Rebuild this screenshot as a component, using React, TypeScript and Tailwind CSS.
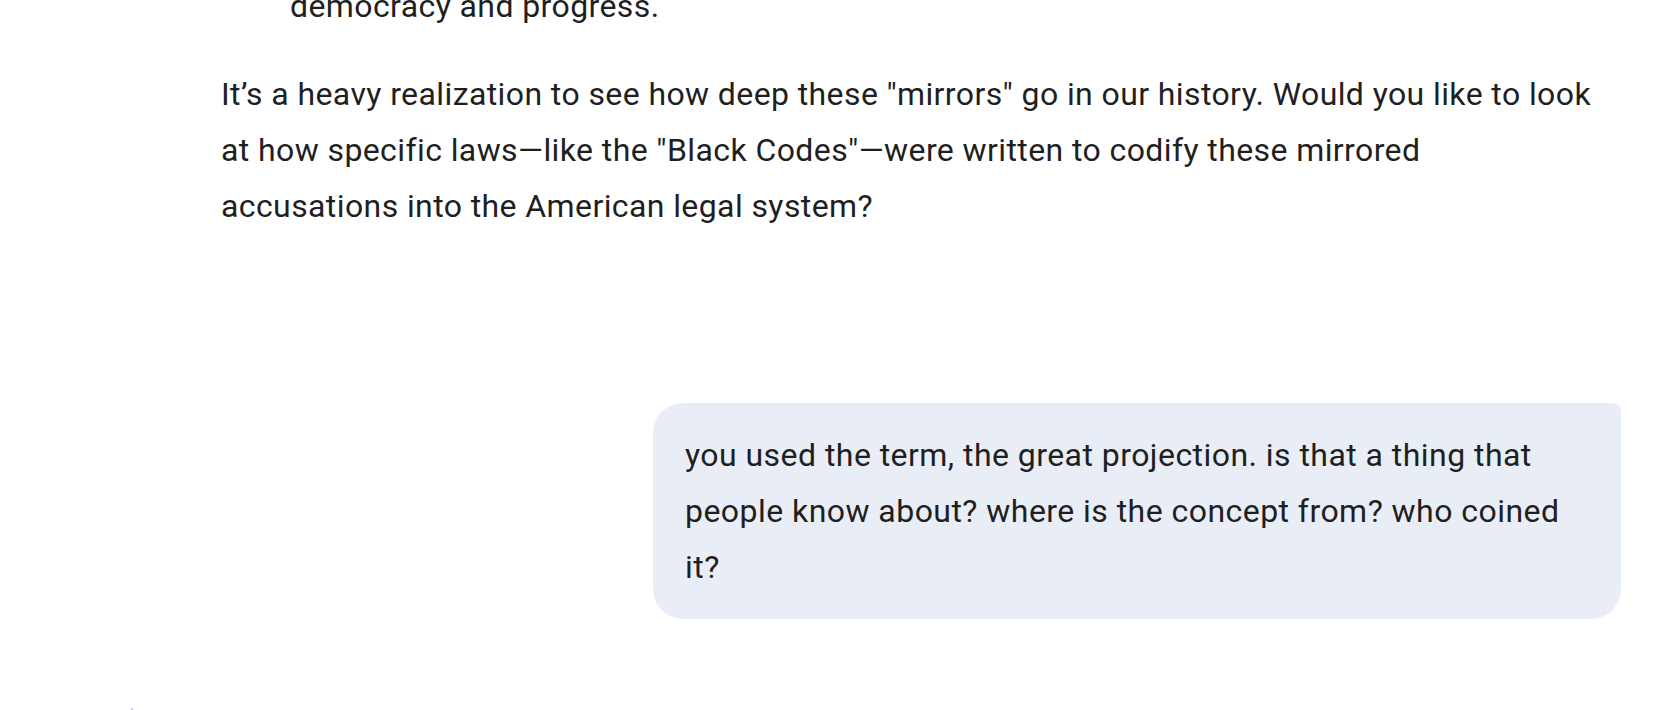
const font = { fontFamily: "Roboto, 'Noto Sans', sans-serif" };

function Sparkle() {
  return (
    <svg width="32" height="32" viewBox="0 0 24 24" aria-hidden="true">
      <defs>
        <linearGradient id="sp" x1="0" y1="0" x2="1" y2="1">
          <stop offset="0" stopColor="#4285f4" />
          <stop offset="1" stopColor="#9b72cb" />
        </linearGradient>
      </defs>
      <path
        d="M12 0C12.6 6.4 17.6 11.4 24 12C17.6 12.6 12.6 17.6 12 24C11.4 17.6 6.4 12.6 0 12C6.4 11.4 11.4 6.4 12 0Z"
        fill="url(#sp)"
      />
    </svg>
  );
}

export default function App() {
  return (
    <div className="h-[710px] w-full overflow-hidden bg-white text-[#1f1f1f]" style={font}>
      <div className="-mt-[22px] flex flex-col">
        <div className="pl-[221px] pr-[37px] text-[32px] leading-[56px] tracking-[0.4px]">
          <ul className="pl-[69px]">
            <li>democracy and progress.</li>
          </ul>
          <p className="mt-[32px] max-w-[1378px]">
            It’s a heavy realization to see how deep these "mirrors" go in our history. Would you like to look
            at how specific laws—like the "Black Codes"—were written to codify these mirrored accusations into the
            American legal system?
          </p>
        </div>

        <div className="mt-[169px] flex justify-end pr-[37px]">
          <div className="w-[968px] rounded-[30px] rounded-tr-[8px] bg-[#e9eef6] px-[32px] py-[24px] text-[32px] leading-[56px] tracking-[0.45px]">
            you used the term, the great projection. is that a thing that people know about? where is the concept
            from? who coined it?
          </div>
        </div>

        <div className="mt-[88px] pl-[116px]">
          <Sparkle />
        </div>
      </div>
    </div>
  );
}
